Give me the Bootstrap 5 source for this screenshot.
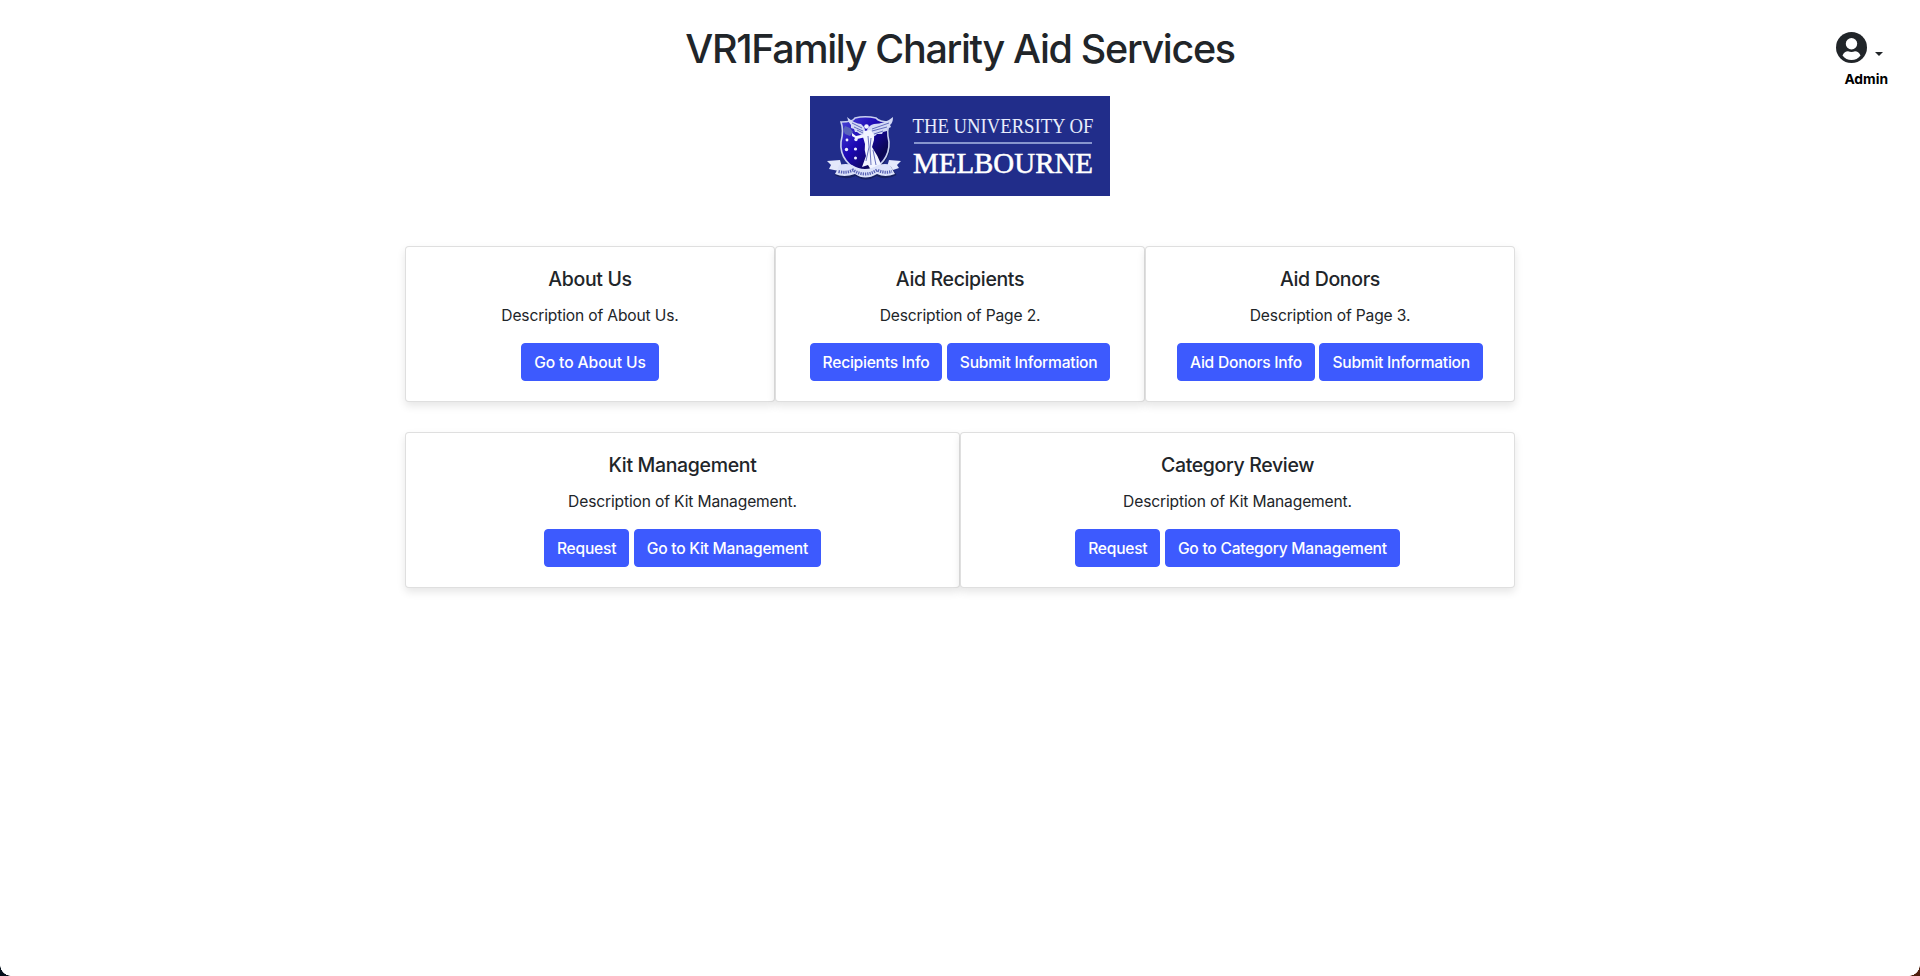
<!DOCTYPE html>
<html lang="en">
<head>
<meta charset="utf-8">
<meta name="viewport" content="width=device-width, initial-scale=1">
<title>VR1Family Charity Aid Services</title>
<link href="https://cdn.jsdelivr.net/npm/bootstrap@5.3.0/dist/css/bootstrap.min.css" rel="stylesheet">
<style>
  body { font-family: Inter, "Liberation Sans", sans-serif; color: #212529; min-height: 100vh; overflow: hidden; }
  .page-title { font-size: 39.5px; font-weight: 500; line-height: 48px; letter-spacing: -1.33px; padding-top: 25px; margin-bottom: 23px; }
  .logo { width: 300px; height: 100px; }
  .board { width: 1110px; margin-top: 50px; }
  .board-row + .board-row { margin-top: 30px; }
  .tile { border: 1px solid rgba(0,0,0,.125); border-radius: 4px; box-shadow: 0 4px 8px rgba(0,0,0,.1); }
  .tile .card-body { padding: 20px; }
  .tile .card-title { font-size: 19.5px; font-weight: 500; line-height: 24px; margin-bottom: 12px; letter-spacing: -.35px; }
  .tile .card-text { font-size: 15.6px; line-height: 24px; padding-top: 1px; margin-bottom: 15px; letter-spacing: -.15px; }
  .tile .btn { --bs-btn-bg: #3d5afe; --bs-btn-border-color: #3d5afe; font-size: 15.6px; line-height: 24px; height: 38px; border-radius: 4px; letter-spacing: -.24px; font-weight: 500; padding: 7px 12px 5px; }
  .tile .btn-about { letter-spacing: -.08px; }
  .account { top: 32px; right: 32px; }
  .account .dropdown-toggle { color: #212529; font-size: 14px; line-height: 1; gap: 8px; }
  .account .dropdown-toggle::after { margin: 12px 5px 0 0; }
  .account-name { font-size: 13.8px; font-weight: 700; line-height: 20px; color: #000; margin-top: 6px; }
  .corner { bottom: 0; width: 11px; height: 11px; }
  .corner-l { left: 0; background: radial-gradient(circle at 100% 0, transparent 10.5px, #06101c 11px); }
  .corner-r { right: 0; background: radial-gradient(circle at 0 0, transparent 10.5px, #50200f 11px); }
</style>
</head>
<body class="bg-white position-relative">
<header class="text-center">
  <h1 class="page-title">VR1Family Charity Aid Services</h1>
  <svg class="logo d-block mx-auto" viewBox="0 0 300 100" role="img" aria-label="The University of Melbourne">
    <defs>
      <linearGradient id="shield" x1="0" y1="0" x2="1" y2="1"><stop offset="0" stop-color="#4c48d8"/><stop offset=".4" stop-color="#1c08b4"/><stop offset=".75" stop-color="#0b0750"/><stop offset="1" stop-color="#2013b0"/></linearGradient>
    </defs>
    <rect width="300" height="100" fill="#212d8a"/>
    <!-- shield -->
    <path d="M32 25Q43 26 56 20Q69 26 81 25Q77 34 80 47Q82 68 56 80Q30 68 32 47Q35 35 32 25Z" fill="#111745" opacity=".6"/>
    <path d="M31 26Q43 26 45 22Q55 19.500 66 22Q69 26 80 26Q76 33 79 46Q80 67 55 78Q29 67 31 46Q34 34 31 26Z" fill="url(#shield)" stroke="#c9d0f0" stroke-width="1.600"/>
    <g fill="#eef1ff">
      <circle cx="46" cy="43.500" r="1.700"/><circle cx="37" cy="44" r="1.400"/><circle cx="45.500" cy="53" r="1.600"/><circle cx="36.500" cy="53.500" r="1.700"/><circle cx="45.500" cy="62" r="1.500"/>
    </g>
    <!-- winged figure -->
    <g fill="#d3d9f6">
      <path d="M54 40Q49 38 47 36L45 36L44 33L41 32L41 29Q38 26 37 21Q45 28 51 28Q54 30 55 34Z"/>
      <path d="M57 34Q59 29 64 28Q75 28 83 21Q83 27 80 29L81 31L77 33L77 35L73 36L72 38L67 38Q65 41 60 41Z"/>
      <path d="M35 30l5 2 3 4-3 4-5-2-2-4Z" fill="#5964bb"/>
    </g>
    <g fill="#f2f4ff">
      <circle cx="56.500" cy="30.500" r="2.300"/>
      <path d="M54 35L60 34Q65 38 64 44L62 51Q68 60 71 68L68 74L65 71L61 74L58 69L52 71L56 60Q54 54 55 48L53 41Z"/>
      <path d="M55 38L46 40L42 37L42 40L47 43L56 41Z"/>
    </g>
    <g fill="none" stroke="#4652ad" stroke-width=".8">
      <path d="M42 27l10 5M44 31l9 4M47 34l6 3M62 33l17-6M62 35l15-4M64 38l9-3"/>
      <path d="M58 40l1 11-3 14M61 42l-1 10 1 17M63 54l3 15"/>
    </g>
    <!-- ribbon -->
    <path d="M17 65L30 64L32 71L29 75L19 73L21 69Z" fill="#e4e8fb"/>
    <path d="M91 65L79 64L77 71L80 75L89 72L87 69Z" fill="#e4e8fb"/>
    <path d="M29 69Q36 67 42 69Q55 78 68 69Q76 68 80 69Q82 73 86 78Q75 84 66 79Q55 86 45 79Q34 84 24 78Q28 73 29 69Z" fill="#111745" opacity=".6" transform="translate(.6 1)"/>
    <path d="M29 69Q36 67 42 69Q55 77 68 69Q76 67 80 69Q82 73 85 78Q75 82 67 78Q55 85 45 78Q34 82 25 78Q28 73 29 69Z" fill="#dce2fa"/>
    <path d="M28.500 75.500Q37 77.500 43 74Q55 82 67 74Q74 77.500 82 75.500" fill="none" stroke="#5660b4" stroke-width="3" stroke-dasharray="1.300 1"/>
    <g fill="#e9edfc" font-family="'Liberation Serif', serif">
      <text x="102.500" y="37.200" font-size="20" textLength="181" lengthAdjust="spacingAndGlyphs">THE UNIVERSITY OF</text>
      <text x="103" y="76.800" font-size="29" fill="#fff" stroke="#fff" stroke-width=".5" textLength="180" lengthAdjust="spacingAndGlyphs">MELBOURNE</text>
    </g>
    <rect x="104" y="46" width="178" height="2" fill="#8795ce"/>
  </svg>
</header>

<div class="account position-absolute d-flex flex-column align-items-end">
  <a class="dropdown-toggle d-flex align-items-center text-decoration-none" href="#" aria-label="Account">
    <svg width="31" height="31" viewBox="0 0 31 31"><circle cx="15.500" cy="15.500" r="15.500" fill="#212529"/><circle cx="15.500" cy="11.700" r="5.700" fill="#fff"/><path d="M6.500 23.500Q8.500 19.300 12 19.300Q15.500 20.500 19 19.300Q22.500 19.300 24.500 23.500Q21 28 15.500 28Q10 28 6.500 23.500Z" fill="#fff"/></svg>
  </a>
  <div class="account-name">Admin</div>
</div>

<main class="board mx-auto">
  <div class="board-row row g-0 text-center">
    <div class="col-4"><div class="card tile"><div class="card-body">
      <h5 class="card-title">About Us</h5>
      <p class="card-text">Description of About Us.</p>
      <a href="#" class="btn btn-primary btn-about">Go to About Us</a>
    </div></div></div>
    <div class="col-4"><div class="card tile"><div class="card-body">
      <h5 class="card-title">Aid Recipients</h5>
      <p class="card-text">Description of Page 2.</p>
      <a href="#" class="btn btn-primary">Recipients Info</a>
      <a href="#" class="btn btn-primary">Submit Information</a>
    </div></div></div>
    <div class="col-4"><div class="card tile"><div class="card-body">
      <h5 class="card-title">Aid Donors</h5>
      <p class="card-text">Description of Page 3.</p>
      <a href="#" class="btn btn-primary">Aid Donors Info</a>
      <a href="#" class="btn btn-primary">Submit Information</a>
    </div></div></div>
  </div>
  <div class="board-row row g-0 text-center">
    <div class="col-6"><div class="card tile"><div class="card-body">
      <h5 class="card-title">Kit Management</h5>
      <p class="card-text">Description of Kit Management.</p>
      <a href="#" class="btn btn-primary">Request</a>
      <a href="#" class="btn btn-primary">Go to Kit Management</a>
    </div></div></div>
    <div class="col-6"><div class="card tile"><div class="card-body">
      <h5 class="card-title">Category Review</h5>
      <p class="card-text">Description of Kit Management.</p>
      <a href="#" class="btn btn-primary">Request</a>
      <a href="#" class="btn btn-primary">Go to Category Management</a>
    </div></div></div>
  </div>
</main>
<div class="corner corner-l position-fixed"></div>
<div class="corner corner-r position-fixed"></div>
<script src="https://cdn.jsdelivr.net/npm/bootstrap@5.3.0/dist/js/bootstrap.bundle.min.js"></script>
</body>
</html>
